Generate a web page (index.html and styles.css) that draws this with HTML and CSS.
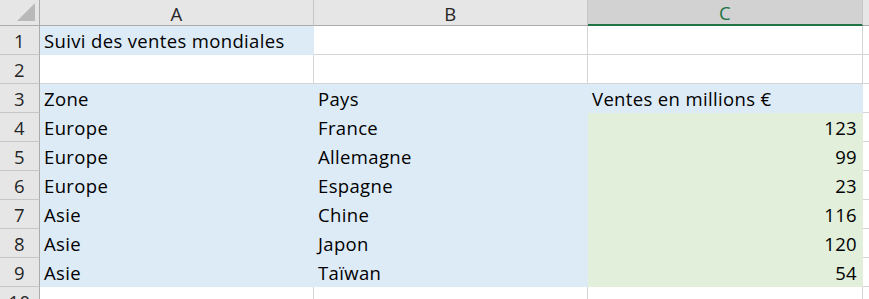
FILE: index.html
```html
<!DOCTYPE html>
<html lang="fr">
<head>
  <meta charset="UTF-8">
  <meta name="viewport" content="width=device-width, initial-scale=1.0">
  <title>Suivi des ventes mondiales</title>
  <link rel="stylesheet" href="styles.css">
</head>
<body>
  <div class="sheet">
    <!-- column headers -->
    <div class="corner"><span class="corner-mark"></span></div>
    <div class="col-head">A</div>
    <div class="col-head">B</div>
    <div class="col-head selected">C</div>
    <div class="col-head"></div>

    <div class="row-head">1</div>
    <div class="cell blue">Suivi des ventes mondiales</div>
    <div class="cell"></div>
    <div class="cell"></div>
    <div class="cell"></div>

    <div class="row-head">2</div>
    <div class="cell"></div>
    <div class="cell"></div>
    <div class="cell"></div>
    <div class="cell"></div>

    <div class="row-head">3</div>
    <div class="cell blue">Zone</div>
    <div class="cell blue">Pays</div>
    <div class="cell blue">Ventes en millions €</div>
    <div class="cell"></div>

    <div class="row-head">4</div>
    <div class="cell blue">Europe</div>
    <div class="cell blue">France</div>
    <div class="cell green num">123</div>
    <div class="cell"></div>

    <div class="row-head">5</div>
    <div class="cell blue">Europe</div>
    <div class="cell blue">Allemagne</div>
    <div class="cell green num">99</div>
    <div class="cell"></div>

    <div class="row-head">6</div>
    <div class="cell blue">Europe</div>
    <div class="cell blue">Espagne</div>
    <div class="cell green num">23</div>
    <div class="cell"></div>

    <div class="row-head">7</div>
    <div class="cell blue">Asie</div>
    <div class="cell blue">Chine</div>
    <div class="cell green num">116</div>
    <div class="cell"></div>

    <div class="row-head">8</div>
    <div class="cell blue">Asie</div>
    <div class="cell blue">Japon</div>
    <div class="cell green num">120</div>
    <div class="cell"></div>

    <div class="row-head">9</div>
    <div class="cell blue">Asie</div>
    <div class="cell blue">Taïwan</div>
    <div class="cell green num">54</div>
    <div class="cell"></div>

    <div class="row-head">10</div>
    <div class="cell"></div>
    <div class="cell"></div>
    <div class="cell"></div>
    <div class="cell"></div>
  </div>
</body>
</html>
```

FILE: styles.css
```css
html, body {
  margin: 0;
  height: 100%;
  overflow: hidden;
  background-color: #ffffff;
}
.sheet {
  display: grid;
  grid-template-columns: 40px 274px 274px 275px 1fr;
  grid-template-rows: 26px repeat(10, 29px);
  font-family: 'Open Sans', Lato, sans-serif;
  font-size: 18.5px;
  letter-spacing: 0.35px;
  color: #000000;
}
.corner, .col-head, .row-head, .cell {
  box-sizing: border-box;
}
.corner {
  position: relative;
  background-color: #e6e6e6;
  border-right: 1px solid #ababab;
  border-bottom: 1px solid #ababab;
}
.corner-mark {
  position: absolute;
  right: 4px;
  bottom: 4px;
  width: 18px;
  height: 18px;
  background-color: #b9b9b9;
  clip-path: polygon(100% 0, 100% 100%, 0 100%);
}
.col-head {
  display: flex;
  align-items: center;
  justify-content: center;
  background-color: #e6e6e6;
  border-right: 1px solid #c6c6c6;
  border-bottom: 1px solid #ababab;
  color: #262626;
  padding-top: 1px;
}
.col-head.selected {
  background-color: #d2d2d2;
  color: #217346;
  border-bottom: 2px solid #217346;
}
.row-head {
  display: flex;
  align-items: center;
  justify-content: center;
  background-color: #e6e6e6;
  border-right: 1px solid #ababab;
  border-bottom: 1px solid #c6c6c6;
  color: #262626;
  padding-top: 1px;
}
.cell {
  display: flex;
  align-items: center;
  padding: 1px 5px 0 4px;
  white-space: nowrap;
  border-right: 1px solid #d4d4d4;
  border-bottom: 1px solid #d4d4d4;
}
.cell.blue {
  background-color: #ddebf7;
  border-color: #ddebf7;
}
.cell.green {
  background-color: #e2efda;
  border-color: #e2efda;
}
.cell.num {
  justify-content: flex-end;
}
```
